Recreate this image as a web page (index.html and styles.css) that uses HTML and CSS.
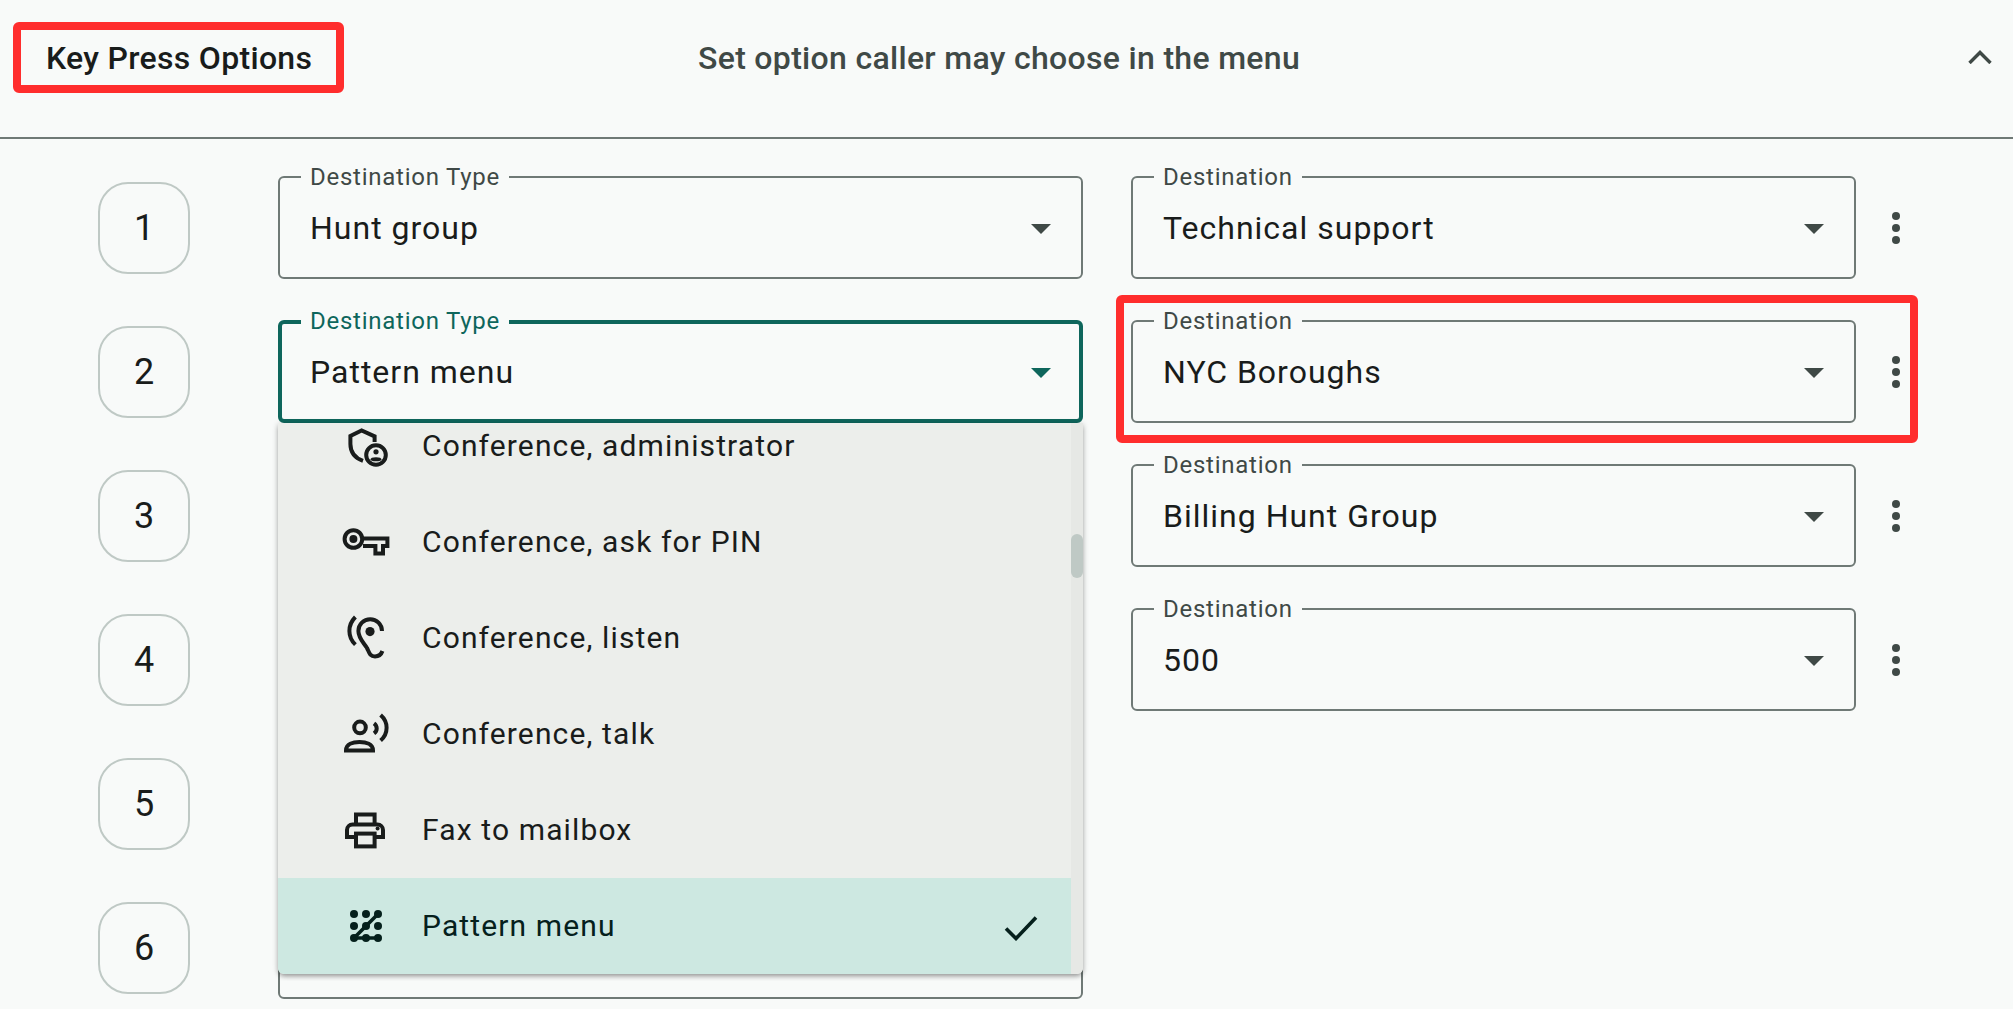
FILE: index.html
```html
<!DOCTYPE html>
<html lang="en">
<head>
<meta charset="utf-8">
<title>Key Press Options</title>
<link rel="stylesheet" href="styles.css">
</head>
<body>
<section class="panel">
  <header class="head">
    <h2 class="title"><span class="mark mark-title"></span>Key Press Options</h2>
    <p class="sub">Set option caller may choose in the menu</p>
    <svg class="chev" viewBox="0 0 24 14"><path d="M1.5 13 12 2.5 22.5 13" fill="none" stroke="#3f4946" stroke-width="3.4"/></svg>
  </header>
  <div class="rows">
    <div class="row">
      <div class="key">1</div>
      <div class="field wide"><span class="lab">Destination Type</span><span class="val">Hunt group</span><i class="arr"></i></div>
      <div class="field nar"><span class="lab">Destination</span><span class="val">Technical support</span><i class="arr"></i></div>
      <div class="dots"><b></b><b></b><b></b></div>
    </div>
    <div class="row">
      <div class="key">2</div>
      <div class="wrap">
        <div class="field wide focus"><span class="lab">Destination Type</span><span class="val">Pattern menu</span><i class="arr"></i></div>
        <div class="menu">
          <ul class="list">
            <li class="item"><svg class="ic" viewBox="0 0 24 24"><path d="M16.300 10V7.200L9.800 4.200 4.200 7V11C4.200 15 6.500 18 10.500 19.400" fill="none" stroke="currentColor" stroke-width="2"/><circle cx="17" cy="16.500" r="4.900" fill="none" stroke="currentColor" stroke-width="2"/><circle cx="17" cy="14.900" r="1.300" fill="currentColor"/><ellipse cx="17" cy="18.600" rx="2.700" ry="1" fill="currentColor"/></svg><span class="txt">Conference, administrator</span></li>
            <li class="item"><svg class="ic" viewBox="0 0 24 24"><circle cx="5.700" cy="10.500" r="4.400" fill="none" stroke="currentColor" stroke-width="2"/><circle cx="5.700" cy="10.500" r="2" fill="currentColor"/><path d="M10.500 10.200H22.700V14H20.500V17.800H16.700V14H10.500" fill="none" stroke="currentColor" stroke-width="2"/></svg><span class="txt">Conference, ask for PIN</span></li>
            <li class="item"><svg class="ic" viewBox="0 0 24 24"><path d="M20 8.500A5.900 5.900 0 0 0 8.200 8.500C8.200 12 10.500 14 12.500 17 13.500 19 13.800 21.200 16.500 21.200 18.500 21.200 19.700 20 20.200 18.500" fill="none" stroke="currentColor" stroke-width="2"/><circle cx="14" cy="8.800" r="2.300" fill="currentColor"/><path d="M6.700 1.500C2.700 5.500 2.700 11.500 6.700 15.300" fill="none" stroke="currentColor" stroke-width="2"/></svg><span class="txt">Conference, listen</span></li>
            <li class="item"><svg class="ic" viewBox="0 0 24 24"><circle cx="9" cy="8.700" r="2.900" fill="none" stroke="currentColor" stroke-width="2"/><path d="M2 20.200C2 17 5.500 16 8.750 16 12 16 15.500 17 15.500 20.200Z" fill="none" stroke="currentColor" stroke-width="2"/><path d="M16 6.700C17.800 8 17.800 10.400 16 11.700" fill="none" stroke="currentColor" stroke-width="2"/><path d="M19.300 2.500C23.300 6 23.300 11.800 19.300 15.300" fill="none" stroke="currentColor" stroke-width="2"/></svg><span class="txt">Conference, talk</span></li>
            <li class="item"><svg class="ic" viewBox="0 0 24 24"><path d="M7 9.300V4.200H16.300V9.300" fill="none" stroke="currentColor" stroke-width="2"/><path d="M7 15.500H2.500V12C2.500 10.400 3.700 9.300 5.300 9.300H17.700C19.300 9.300 20.500 10.400 20.500 12V15.500H16.300" fill="none" stroke="currentColor" stroke-width="2"/><rect x="7" y="13.800" width="9.300" height="6.400" fill="none" stroke="currentColor" stroke-width="2"/><circle cx="17.800" cy="11.200" r="1" fill="currentColor"/></svg><span class="txt">Fax to mailbox</span></li>
            <li class="item sel"><svg class="ic" viewBox="0 0 24 24"><g fill="currentColor"><circle cx="6" cy="6" r="2"/><circle cx="12" cy="6" r="2"/><circle cx="18" cy="6" r="2"/><circle cx="6" cy="12" r="2"/><circle cx="12" cy="12" r="2"/><circle cx="18" cy="12" r="2"/><circle cx="6" cy="18" r="2"/><circle cx="12" cy="18" r="2"/><circle cx="18" cy="18" r="2"/></g><path d="M6 18h12M6 18 18 6" stroke="currentColor" stroke-width="1.800" fill="none"/></svg><span class="txt">Pattern menu</span><svg class="check" viewBox="0 0 34 26"><path d="M2 13.500 12 23.500 32 2.500" fill="none" stroke="currentColor" stroke-width="3.600"/></svg></li>
          </ul>
          <div class="track"><div class="thumb"></div></div>
        </div>
      </div>
      <div class="mark-wrap">
        <div class="mark mark-dest"></div>
        <div class="field nar"><span class="lab">Destination</span><span class="val">NYC Boroughs</span><i class="arr"></i></div>
        <div class="dots"><b></b><b></b><b></b></div>
      </div>
    </div>
    <div class="row">
      <div class="key">3</div>
      <div class="field wide"></div>
      <div class="field nar"><span class="lab">Destination</span><span class="val">Billing Hunt Group</span><i class="arr"></i></div>
      <div class="dots"><b></b><b></b><b></b></div>
    </div>
    <div class="row">
      <div class="key">4</div>
      <div class="field wide"></div>
      <div class="field nar"><span class="lab">Destination</span><span class="val">500</span><i class="arr"></i></div>
      <div class="dots"><b></b><b></b><b></b></div>
    </div>
    <div class="row">
      <div class="key">5</div>
      <div class="field wide"></div>
    </div>
    <div class="row">
      <div class="key">6</div>
      <div class="field wide"></div>
    </div>
  </div>
</section>
</body>
</html>
```
FILE: styles.css
```css
* { box-sizing: border-box; }
html, body { margin: 0; height: 100%; overflow: hidden; }
body { background: #f8faf9; font-family: Roboto, "Liberation Sans", sans-serif; color: #191c1b; }
.panel { width: 2013px; height: 1009px; overflow: hidden; }
.head { position: relative; height: 139px; border-bottom: 2px solid #6f7976; display: flex; align-items: flex-start; padding: 38px 0 0 46px; }
.title { position: relative; margin: 0; width: 652px; font-size: 32px; line-height: 40px; font-weight: 500; letter-spacing: 0.3px; }
.mark { position: absolute; border: 8px solid #ff2d2d; border-radius: 6px; pointer-events: none; }
.mark-title { left: -33px; top: -16px; width: 331px; height: 71px; }
.sub { margin: 0; font-size: 32px; line-height: 40px; font-weight: 500; color: #3f4946; letter-spacing: 0.31px; }
.chev { position: absolute; left: 1968px; top: 50px; width: 24px; height: 14px; }
.rows { padding: 37px 0 0 98px; display: flex; flex-direction: column; gap: 41px; }
.row { display: flex; align-items: center; height: 103px; }
.key { width: 92px; height: 92px; margin-right: 88px; border: 2px solid #bfc9c5; border-radius: 30px; display: flex; align-items: center; justify-content: center; font-size: 36px; }
.wrap { position: relative; }
.field { position: relative; height: 103px; border: 2px solid #6f7976; border-radius: 6px; flex: none; }
.wide { width: 805px; margin-right: 48px; }
.nar { width: 725px; }
.lab { position: absolute; left: 21px; top: -15px; padding: 0 9px; background: #f8faf9; font-size: 24px; line-height: 28px; color: #3f4946; letter-spacing: 0.75px; white-space: nowrap; }
.val { position: absolute; left: 30px; top: 30px; font-size: 32px; line-height: 40px; letter-spacing: 1px; white-space: nowrap; }
.arr { position: absolute; right: 30px; top: 46px; width: 0; height: 0; border-left: 10px solid transparent; border-right: 10px solid transparent; border-top: 10px solid #3f4946; }
.focus { border: 4px solid #0e665c; }
.focus .lab { color: #0e665c; left: 19px; top: -17px; }
.focus .val { left: 28px; top: 28px; }
.focus .arr { right: 28px; top: 44px; border-top-color: #0e665c; }
.menu { position: absolute; left: 0; top: 103px; width: 805px; height: 551px; display: flex; background: #eceeeb; border-radius: 0 0 6px 6px; overflow: hidden; box-shadow: 0 3px 5px -1px rgba(0,0,0,.3), 0 1px 6px rgba(0,0,0,.2); z-index: 2; }
.list { list-style: none; margin: 0; padding: 0; flex: 1; display: flex; flex-direction: column; justify-content: flex-end; overflow: hidden; }
.item { flex: none; height: 96px; display: flex; align-items: center; padding-left: 64px; font-size: 30px; letter-spacing: 1.13px; color: #191c1b; position: relative; }
.txt { margin-bottom: 2px; }
.ic { width: 48px; height: 48px; margin-right: 32px; flex: none; }
.sel { background: #cde8e1; color: #05201c; }
.check { position: absolute; left: 726px; top: 37px; width: 34px; height: 26px; }
.track { width: 12px; background: #e6e8e5; position: relative; }
.thumb { position: absolute; left: 0; top: 111px; width: 12px; height: 44px; background: #bfc9c5; border-radius: 6px; }
.mark-wrap { position: relative; display: flex; align-items: center; }
.mark-dest { left: -15px; top: -25px; width: 802px; height: 148px; }
.dots { width: 80px; display: flex; flex-direction: column; align-items: center; gap: 4px; }
.dots b { width: 8px; height: 8px; border-radius: 50%; background: #3f4946; }
```
